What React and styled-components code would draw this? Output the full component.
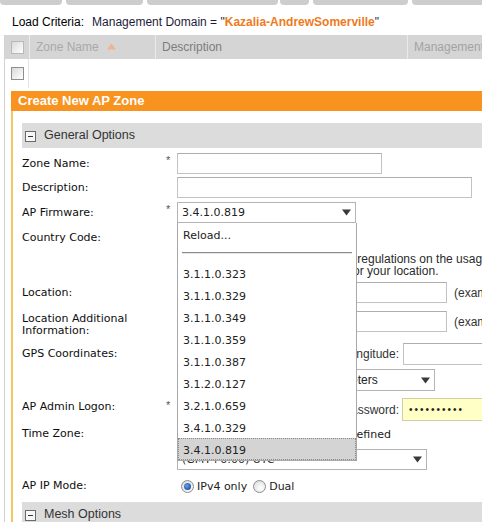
import React from 'react'
import styled, { createGlobalStyle } from 'styled-components'

const GlobalStyle = createGlobalStyle`
  html, body {
    margin: 0;
    padding: 0;
    background: #fff;
    overflow: hidden;
  }
  body {
    font-family: 'Liberation Sans', Arial, sans-serif;
    font-size: 12px;
    color: #222;
  }
`

const firmwares = [
  '3.1.1.0.323',
  '3.1.1.0.329',
  '3.1.1.0.349',
  '3.1.1.0.359',
  '3.1.1.0.387',
  '3.1.2.0.127',
  '3.2.1.0.659',
  '3.4.1.0.329',
  '3.4.1.0.819',
]

const Arrow = () => (
  <svg width='9' height='7' viewBox='0 0 9 7'>
    <path d='M0 0.5 L9 0.5 L4.5 6.5 Z' fill='#3a3a3a' />
  </svg>
)

const SortArrow = () => (
  <svg width='9' height='7' viewBox='0 0 9 7'>
    <path d='M4.5 0.5 L9 6.5 L0 6.5 Z' fill='#f2b48a' />
  </svg>
)

const App = () => {
  return (
    <Page>
      <GlobalStyle />
      <TabStrip>
        <Tab $w={62} />
        <Tab $w={77} />
        <Tab $w={131} />
        <Tab $w={29} $tight />
        <Tab $w={95} />
        <Tab $w={90} />
      </TabStrip>

      <Criteria>
        Load Criteria:
        <CriteriaValue>
          Management Domain = "<Domain>Kazalia-AndrewSomerville</Domain>"
        </CriteriaValue>
      </Criteria>

      <Frame>
        <GridHeader>
          <CheckCell $header>
            <Checkbox $faded />
          </CheckCell>
          <HeaderCell $w={126} $color='#a9a9a9'>
            Zone Name
            <SortIcon>
              <SortArrow />
            </SortIcon>
          </HeaderCell>
          <HeaderCell $w={252} $color='#7d7d7d'>
            Description
          </HeaderCell>
          <HeaderCell $w={200} $color='#a3a3a3'>
            Management Domain
          </HeaderCell>
        </GridHeader>
        <GridRow>
          <CheckCell>
            <Checkbox />
          </CheckCell>
        </GridRow>

        <Panel>
          <PanelTitle>Create New AP Zone</PanelTitle>
          <PanelBody>
            <SectionHeader>
              <MinusBox />
              General Options
            </SectionHeader>

            <FormRow $mt={5}>
              <Label>Zone Name:</Label>
              <Star>*</Star>
              <Field>
                <TextBox $w={205} />
              </Field>
            </FormRow>

            <FormRow $mt={3}>
              <Label>Description:</Label>
              <Star />
              <Field>
                <TextBox $w={295} />
              </Field>
            </FormRow>

            <FormRow $mt={4}>
              <Label>AP Firmware:</Label>
              <Star>*</Star>
              <Field>
                <SelectWrap>
                  <SelectBox $w={179}>
                    <SelectText>3.4.1.0.819</SelectText>
                    <Arrow />
                  </SelectBox>
                  <DropList>
                    <DropItem>Reload...</DropItem>
                    <DropSeparator />
                    {firmwares.map((v) => (
                      <DropItem key={v} $active={v === '3.4.1.0.819'}>
                        {v}
                      </DropItem>
                    ))}
                  </DropList>
                </SelectWrap>
              </Field>
            </FormRow>

            <FormRow $mt={4} $top>
              <Label $lh={21}>Country Code:</Label>
              <Star />
              <FieldColumn>
                <SelectBox $w={179}>
                  <SelectText>United States</SelectText>
                  <Arrow />
                </SelectBox>
                <Note>
                  Different countries have different regulations on the usage of radio channels.
                  <br />
                  Select the correct country code for your location.
                </Note>
              </FieldColumn>
            </FormRow>

            <FormRow $mt={5}>
              <Label>Location:</Label>
              <Star />
              <Field>
                <TextBox $w={270} />
                <Hint>(example: Ruckus HQ)</Hint>
              </Field>
            </FormRow>

            <FormRow $mt={8} $top>
              <Label $lh={12} $pt={2}>
                Location Additional
                <br />
                Information:
              </Label>
              <Star />
              <Field>
                <TextBox $w={270} />
                <Hint>(example: 350 W Java Dr, Sunnyvale)</Hint>
              </Field>
            </FormRow>

            <FormRow $mt={6}>
              <Label>GPS Coordinates:</Label>
              <Star />
              <Field>
                <TextBox $w={158} $h={22} />
                <InlineText $ml={8}>Longitude:</InlineText>
                <TextBox $w={120} $h={22} $ml={4} />
              </Field>
            </FormRow>

            <FormRow $mt={4}>
              <Label />
              <Star />
              <Field>
                <TextBox $w={153} $h={22} />
                <SelectBox $w={99} $h={22} $ml={6} $pad={4}>
                  <SelectText $arial>meters</SelectText>
                  <Arrow />
                </SelectBox>
              </Field>
            </FormRow>

            <FormRow $mt={7} $top>
              <Label $lh={16} $pt={1}>AP Admin Logon:</Label>
              <Star>*</Star>
              <Field>
                <TextBox $w={158} $h={22} defaultValue='admin' readOnly />
                <InlineText $ml={8}>Password:</InlineText>
                <Secret $ml={3} defaultValue='••••••••••' readOnly />
              </Field>
            </FormRow>

            <FormRow $mt={5} $top>
              <Label $lh={16}>Time Zone:</Label>
              <Star />
              <FieldColumn>
                <RadioLine>
                  <Radio />
                  <RadioText>System defined</RadioText>
                  <Radio $checked $ml={22} />
                  <RadioText>User defined</RadioText>
                </RadioLine>
                <SelectBox $w={250} $mt={7}>
                  <SelectText>(GMT+0:00) UTC</SelectText>
                  <Arrow />
                </SelectBox>
              </FieldColumn>
            </FormRow>

            <FormRow $mt={8}>
              <Label $lh={16}>AP IP Mode:</Label>
              <Star />
              <RadioLine>
                <Radio $checked />
                <RadioText>IPv4 only</RadioText>
                <Radio $ml={6} />
                <RadioText>Dual</RadioText>
              </RadioLine>
            </FormRow>

            <SectionHeader $mt={8}>
              <MinusBox />
              Mesh Options
            </SectionHeader>
          </PanelBody>
        </Panel>
      </Frame>
    </Page>
  )
}

export default App

const Page = styled.div`
  width: 482px;
  height: 522px;
  overflow: hidden;
`
const TabStrip = styled.div`
  display: flex;
  height: 5px;
  width: 700px;
`
const Tab = styled.div`
  width: ${(p) => p.$w}px;
  margin-left: ${(p) => (p.$tight ? 2 : 4)}px;
  height: 5px;
  background: #cdcdcd;
  border-radius: 0 0 4px 4px;
  &:first-child {
    margin-left: 0;
  }
`
const Criteria = styled.div`
  margin: 10px 0 0 12px;
  height: 14px;
  line-height: 14px;
  font-size: 12px;
  color: #000;
  white-space: nowrap;
`
const CriteriaValue = styled.span`
  margin-left: 8px;
  color: #1c1c3a;
`
const Domain = styled.span`
  color: #ee7a1c;
  font-weight: bold;
`
const Frame = styled.div`
  margin: 6px 0 0 4px;
  width: 700px;
  border-left: 1px solid #d2d2d2;
`
const GridHeader = styled.div`
  display: flex;
  height: 24px;
  background: #d5d5d5;
`
const HeaderCell = styled.div`
  width: ${(p) => p.$w}px;
  display: flex;
  align-items: center;
  padding-left: 6px;
  box-sizing: border-box;
  border-left: 1px solid #eaeaea;
  color: ${(p) => p.$color};
  font-size: 12px;
  white-space: nowrap;
`
const SortIcon = styled.span`
  display: flex;
  margin-left: 8px;
  margin-top: -1px;
`
const GridRow = styled.div`
  display: flex;
  height: 29px;
  background: #fff;
`
const CheckCell = styled.div`
  width: 24px;
  display: flex;
  align-items: center;
  justify-content: center;
  box-sizing: border-box;
  border-right: ${(p) => (p.$header ? 'none' : '1px solid #e4e4e4')};
`
const Checkbox = styled.span`
  display: block;
  width: 11px;
  height: 11px;
  border: 1px solid ${(p) => (p.$faded ? '#b8b8b8' : '#8e8e8e')};
  background: linear-gradient(135deg, #d9d9d9 0%, #f4f4f4 70%, #fff 100%);
  margin-left: 1px;
`
const Panel = styled.div`
  margin: 3px 0 0 6px;
`
const PanelTitle = styled.div`
  height: 20px;
  line-height: 20px;
  background: #f7931e;
  color: #fff;
  font-weight: bold;
  font-size: 13px;
  padding-left: 7px;
`
const PanelBody = styled.div`
  border-left: 2px solid #f3c468;
  padding: 12px 0 30px 9px;
`
const SectionHeader = styled.div`
  display: flex;
  align-items: center;
  gap: 8px;
  box-sizing: border-box;
  height: 25px;
  padding: 0 0 2px 3px;
  margin-top: ${(p) => p.$mt || 0}px;
  background: #dcdcdc;
  font-size: 12.5px;
  color: #333;
`
const MinusBox = styled.span`
  position: relative;
  display: block;
  width: 9px;
  height: 9px;
  border: 1px solid #6a6a6a;
  background: #f7f7f7;
  margin-top: 3px;
  &::after {
    content: '';
    position: absolute;
    left: 2px;
    top: 4px;
    width: 5px;
    height: 1px;
    background: #333;
  }
`
const FormRow = styled.div`
  display: flex;
  align-items: ${(p) => (p.$top ? 'flex-start' : 'center')};
  margin-top: ${(p) => p.$mt}px;
`
const Label = styled.div`
  width: 144px;
  flex-shrink: 0;
  padding-top: ${(p) => p.$pt || 0}px;
  font-family: 'DejaVu Sans', Verdana, sans-serif;
  font-size: 11px;
  line-height: ${(p) => p.$lh || 16}px;
  color: #0e0e0e;
`
const Star = styled.div`
  width: 11px;
  flex-shrink: 0;
  align-self: flex-start;
  font-size: 11px;
  line-height: 14px;
  color: #555;
`
const Field = styled.div`
  display: flex;
  align-items: center;
`
const FieldColumn = styled.div`
  display: flex;
  flex-direction: column;
`
const TextBox = styled.input`
  box-sizing: border-box;
  width: ${(p) => p.$w}px;
  height: ${(p) => p.$h || 21}px;
  margin: 0 0 0 ${(p) => p.$ml || 0}px;
  padding: 0 4px;
  border: 1px solid #c3c3c3;
  border-top-color: #aeaeae;
  background: #fff;
  font-family: 'DejaVu Sans', Verdana, sans-serif;
  font-size: 11px;
  color: #222;
  outline: none;
`
const Secret = styled(TextBox)`
  width: 110px;
  height: 23px;
  background: #ffffc6;
  border-color: #cfcfa8;
  font-family: 'Liberation Sans', Arial, sans-serif;
  font-size: 10px;
  letter-spacing: 2px;
  padding-left: 6px;
  color: #222;
`
const SelectWrap = styled.div`
  position: relative;
`
const SelectBox = styled.div`
  box-sizing: border-box;
  width: ${(p) => p.$w}px;
  height: ${(p) => p.$h || 21}px;
  margin-left: ${(p) => p.$ml || 0}px;
  margin-top: ${(p) => p.$mt || 0}px;
  display: flex;
  align-items: center;
  justify-content: space-between;
  padding: 0 4px 0 ${(p) => p.$pad || 4}px;
  border: 1px solid #b4b4b4;
  background: #fff;
`
const SelectText = styled.span`
  font-family: ${(p) =>
    p.$arial ? "'Liberation Sans', Arial, sans-serif" : "'DejaVu Sans', Verdana, sans-serif"};
  font-size: ${(p) => (p.$arial ? 12 : 11)}px;
  color: #222;
  white-space: nowrap;
`
const DropList = styled.div`
  position: absolute;
  top: 21px;
  left: 0;
  width: 180px;
  box-sizing: border-box;
  background: #fff;
  border: 1px solid #a8a8a8;
  border-top: none;
  z-index: 10;
`
const DropItem = styled.div`
  box-sizing: border-box;
  height: 22px;
  padding-top: 2px;
  line-height: 19px;
  padding-left: ${(p) => (p.$active ? 4 : 5)}px;
  font-family: 'DejaVu Sans', Verdana, sans-serif;
  font-size: 11px;
  color: #222;
  background: ${(p) => (p.$active ? '#d4d4d4' : '#fff')};
  border: ${(p) => (p.$active ? '1px dotted #8a8a8a' : '1px solid transparent')};
  border-left: ${(p) => (p.$active ? '1px dotted #8a8a8a' : 'none')};
`
const DropSeparator = styled.div`
  height: 17px;
  box-sizing: border-box;
  padding-top: 7px;
  margin: 0 4px 0 4px;
  &::after {
    content: '';
    display: block;
    border-top: 1px solid #8c8c8c;
    border-bottom: 1px solid #e4e4e4;
  }
`
const Note = styled.div`
  margin: 5px 0 0 4px;
  font-size: 12px;
  line-height: 12px;
  color: #2a2a2a;
  white-space: nowrap;
`
const Hint = styled.span`
  margin-left: 7px;
  font-size: 12px;
  color: #333;
  white-space: nowrap;
`
const InlineText = styled.span`
  margin-left: ${(p) => p.$ml || 0}px;
  font-size: 12px;
  color: #333;
  white-space: nowrap;
`
const RadioLine = styled.div`
  display: flex;
  align-items: center;
  height: 16px;
  padding-left: 4px;
`
const Radio = styled.span`
  position: relative;
  display: block;
  box-sizing: border-box;
  width: 13px;
  height: 13px;
  margin-left: ${(p) => p.$ml || 0}px;
  border-radius: 50%;
  border: 1px solid #8d8d8d;
  background: radial-gradient(circle at 60% 65%, #fff 0%, #e8e8e8 60%, #cfcfcf 100%);
  &::after {
    content: '';
    display: ${(p) => (p.$checked ? 'block' : 'none')};
    position: absolute;
    left: 2px;
    top: 2px;
    width: 7px;
    height: 7px;
    border-radius: 50%;
    background: radial-gradient(circle at 40% 40%, #6fa0e6 0%, #1f56b3 70%, #183f86 100%);
  }
`
const RadioText = styled.span`
  margin-left: 3px;
  font-family: 'DejaVu Sans', Verdana, sans-serif;
  font-size: 11px;
  color: #222;
  white-space: nowrap;
`
